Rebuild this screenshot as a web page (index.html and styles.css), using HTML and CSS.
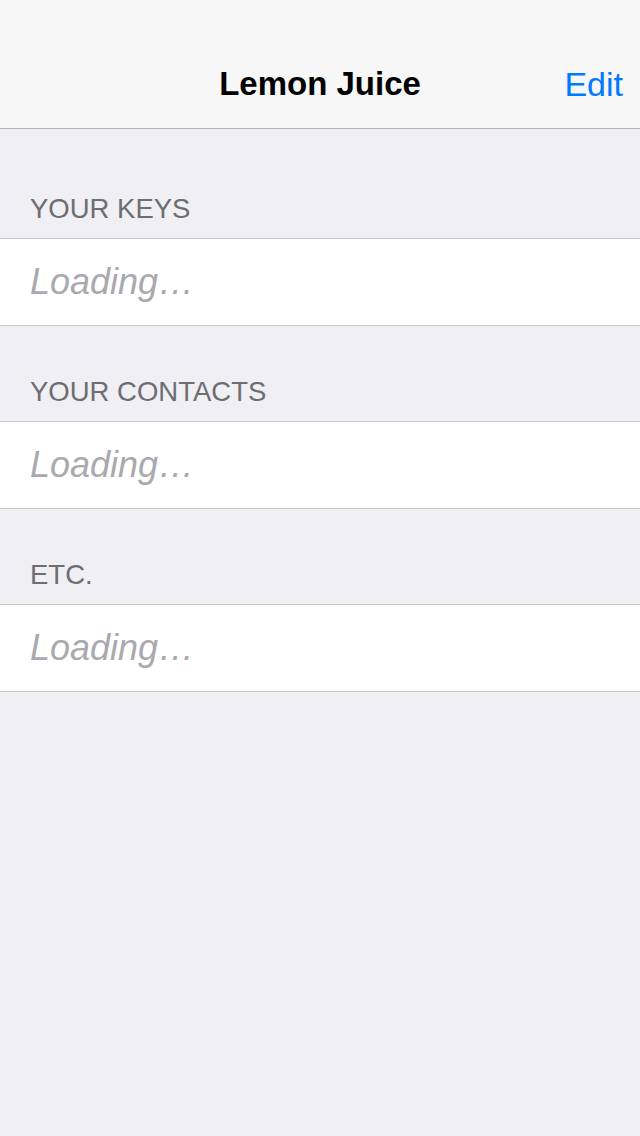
FILE: index.html
```html
<!DOCTYPE html>
<html>
<head>
<meta charset="utf-8">
<link rel="stylesheet" href="styles.css">
</head>
<body>
<div class="nav">
  <div class="status"></div>
  <div class="bar">
    <div class="title">Lemon Juice</div>
    <div class="edit">Edit</div>
  </div>
</div>
<div class="content">
  <div class="section first">
    <div class="header">YOUR KEYS</div>
    <div class="cell">Loading…</div>
  </div>
  <div class="section">
    <div class="header">YOUR CONTACTS</div>
    <div class="cell">Loading…</div>
  </div>
  <div class="section">
    <div class="header">ETC.</div>
    <div class="cell">Loading…</div>
  </div>
</div>
</body>
</html>
```

FILE: styles.css
```css
html, body {
  margin: 0;
  padding: 0;
}
body {
  width: 640px;
  height: 1136px;
  background: #efeff4;
  font-family: "Liberation Sans", Arial, sans-serif;
  overflow: hidden;
}
.nav {
  background: #f7f7f7;
  border-bottom: 1px solid #b2b2b2;
}
.status {
  height: 40px;
}
.bar {
  height: 88px;
  position: relative;
  display: flex;
  align-items: center;
  justify-content: center;
}
.title {
  font-size: 33px;
  font-weight: bold;
  color: #000;
}
.edit {
  position: absolute;
  right: 17px;
  top: 0;
  height: 88px;
  display: flex;
  align-items: center;
  font-size: 34px;
  color: #007aff;
}
.section .header {
  height: 95px;
  box-sizing: border-box;
  display: flex;
  align-items: flex-end;
  padding: 0 0 13px 30px;
  font-size: 27.5px;
  line-height: 32px;
  color: #6d6d72;
}
.section.first .header {
  height: 109px;
}
.cell {
  height: 86px;
  background: #fff;
  border-top: 1px solid #c8c7cc;
  border-bottom: 1px solid #c8c7cc;
  display: flex;
  align-items: center;
  padding-left: 30px;
  font-size: 36px;
  font-style: italic;
  color: #a9a9ae;
}
```
